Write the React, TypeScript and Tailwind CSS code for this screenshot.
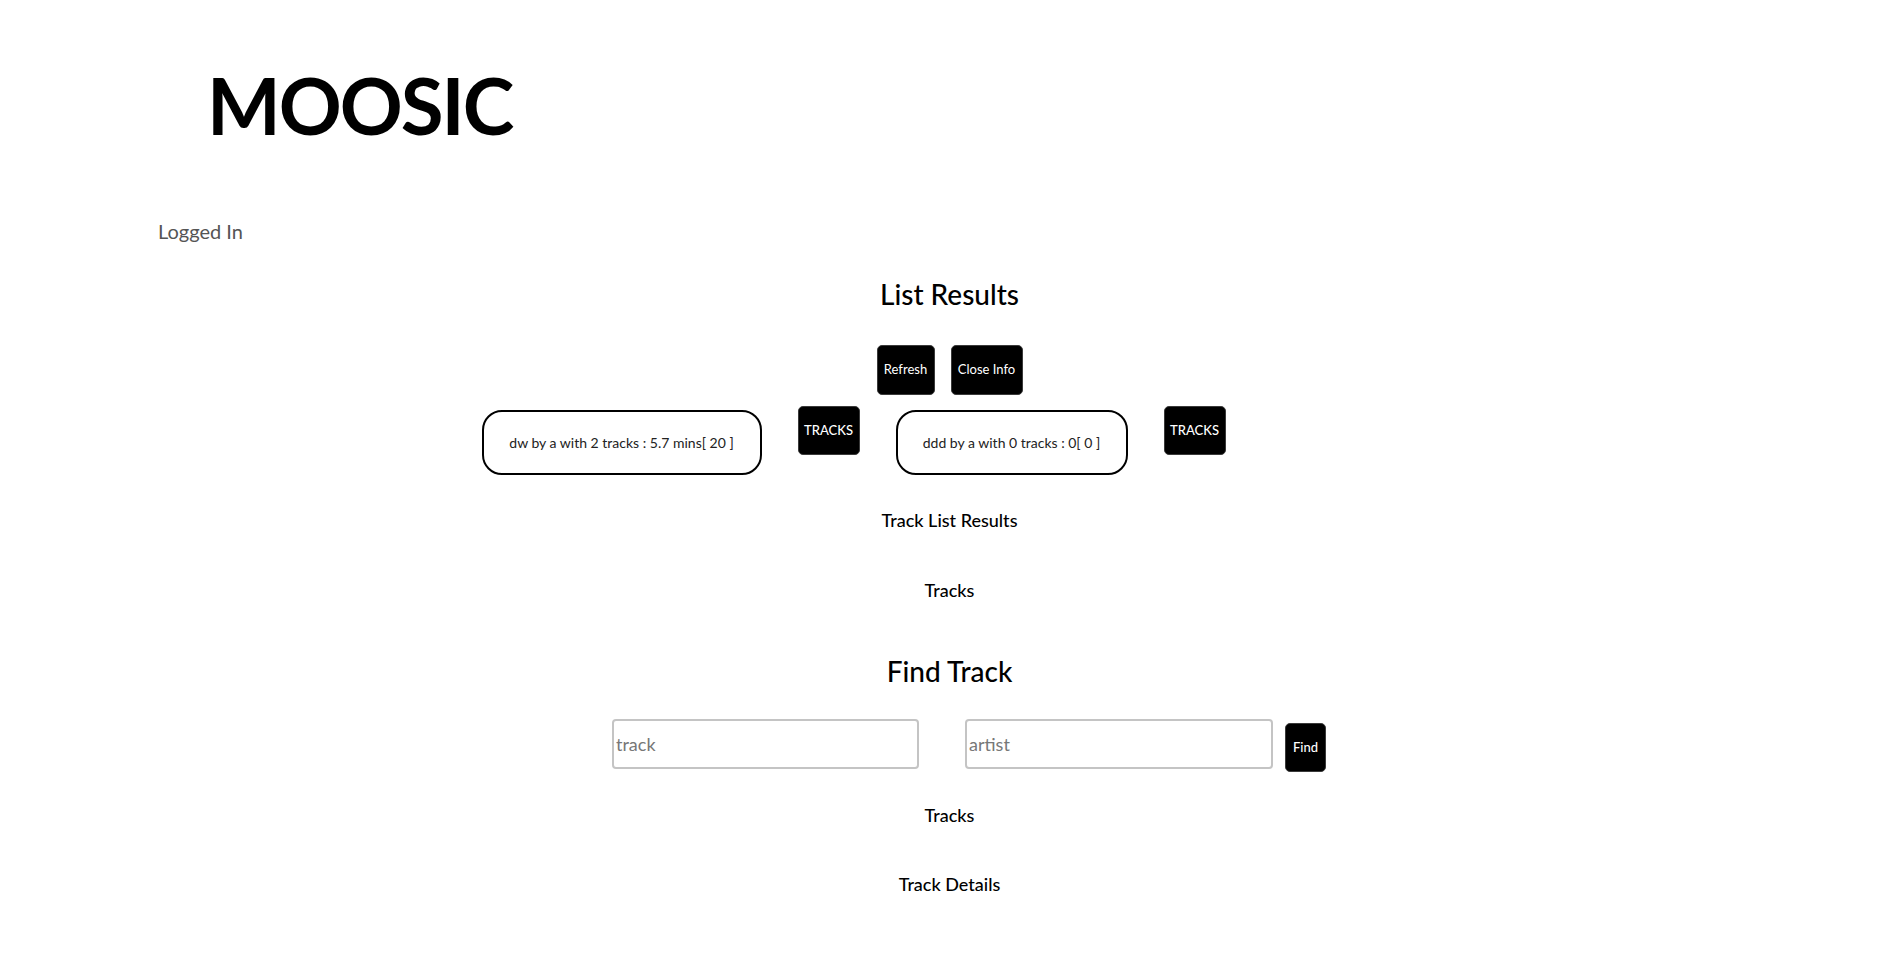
import React from "react";

type Playlist = {
  name: string;
  creator: string;
  count: number;
  duration: string;
  rating: number;
  width: string;
};

const playlists: Playlist[] = [
  { name: "dw", creator: "a", count: 2, duration: "5.7 mins", rating: 20, width: "w-[280px]" },
  { name: "ddd", creator: "a", count: 0, duration: "0", rating: 0, width: "w-[232px]" },
];

function BlackButton({
  label,
  className,
}: {
  label: string;
  className: string;
}) {
  return (
    <button
      className={`bg-black text-white border border-[#3a3a3a] rounded-[5px] flex items-center justify-center ${className}`}
    >
      {label}
    </button>
  );
}

export default function App() {
  return (
    <div className="min-h-screen bg-white text-black font-['Lato',sans-serif]">
      {/* HEADER */}
      <header className="h-[210px] flex items-center pl-[207px]">
        <h1 className="text-[78px] leading-none font-bold tracking-[-2px]">
          MOOSIC
        </h1>
      </header>

      <div className="h-[42px] flex items-center pl-[158px]">
        <span className="text-[20px] text-[#555]">Logged In</span>
      </div>

      {/* LIST RESULTS */}
      <section className="flex flex-col items-center">
        <h2 className="h-[84px] flex items-center text-[28px] font-medium">
          List Results
        </h2>

        <div className="mt-[9px] flex gap-4">
          <BlackButton label="Refresh" className="w-[58px] h-[50px] text-[13px]" />
          <BlackButton label="Close Info" className="w-[72px] h-[50px] text-[13px]" />
        </div>

        <div className="mt-[11px] flex items-start gap-9 pr-[192px]">
          {playlists.map((p) => (
            <React.Fragment key={p.name}>
              <div
                className={`${p.width} h-[65px] mt-1 border-2 border-black rounded-[20px] flex items-center justify-center text-[14px] text-[#222]`}
              >
                {p.name} by {p.creator} with {p.count} tracks : {p.duration}[ {p.rating} ]
              </div>
              <BlackButton label="TRACKS" className="w-[62px] h-[49px] text-[13px] font-medium" />
            </React.Fragment>
          ))}
        </div>

        <h3 className="h-[90px] flex items-center text-[18px] font-medium">
          Track List Results
        </h3>
        <h3 className="h-[50px] flex items-center text-[18px] font-medium">
          Tracks
        </h3>
      </section>

      {/* FIND TRACK */}
      <section className="flex flex-col items-center">
        <h2 className="mt-[25px] h-[62px] flex items-center text-[28px] font-medium">
          Find Track
        </h2>

        <div className="mt-[17px] flex items-start pl-[39px]">
          <input
            type="text"
            placeholder="track"
            className="w-[307px] h-[50px] border-2 border-[#c4c4c4] rounded-[4px] px-[2px] text-[18px] placeholder:text-[#777] outline-none"
          />
          <input
            type="text"
            placeholder="artist"
            className="ml-[46px] w-[308px] h-[50px] border-2 border-[#c4c4c4] rounded-[4px] px-[2px] text-[18px] placeholder:text-[#777] outline-none"
          />
          <BlackButton label="Find" className="ml-3 mt-1 w-[41px] h-[49px] text-[13px] font-medium" />
        </div>

        <h3 className="h-[86px] flex items-center text-[18px] font-medium">
          Tracks
        </h3>
        <h3 className="h-[52px] flex items-center text-[18px] font-medium">
          Track Details
        </h3>
      </section>
    </div>
  );
}
